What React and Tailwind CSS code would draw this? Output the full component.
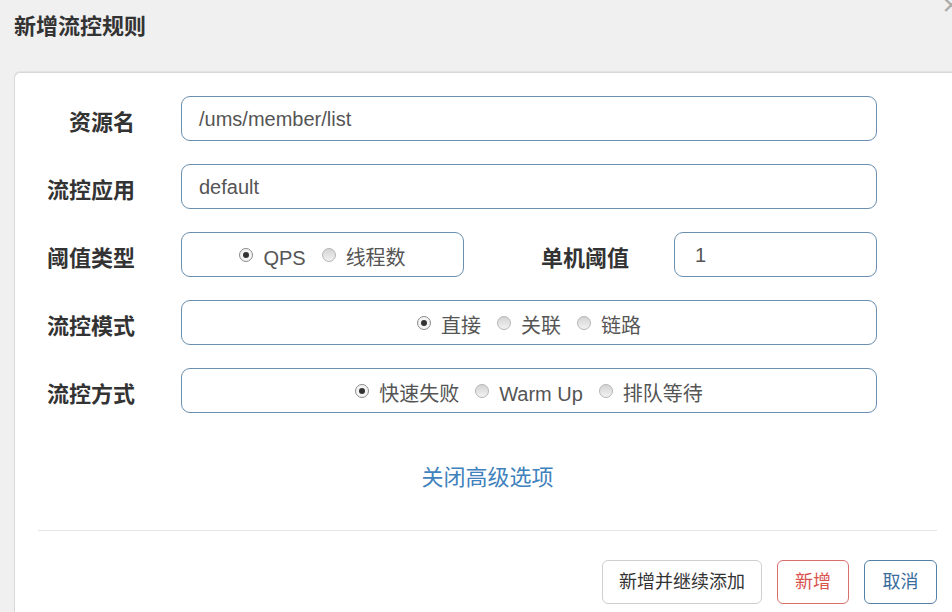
import React from 'react';

const font = { fontFamily: '"Liberation Sans", "Noto Sans CJK SC", sans-serif' };

const Radio = ({ label, checked }) => (
  <span className="flex items-center gap-[10px]">
    <span
      className={`w-[14px] h-[14px] rounded-full border flex items-center justify-center ${
        checked ? 'border-[#8c8c8c] bg-[#f4f4f4]' : 'border-[#b5b5b5] bg-gradient-to-b from-[#d4d4d4] to-[#f2f2f2]'
      }`}
    >
      {checked && <span className="w-[6px] h-[6px] rounded-full bg-[#333]" />}
    </span>
    <span className="text-[20px] text-[#555] pt-[6px]">{label}</span>
  </span>
);

const RadioBox = ({ options, className = '' }) => (
  <div
    className={`h-[45px] border-[1.5px] border-[#6b8fae] rounded-[9px] flex items-center justify-center gap-[16px] ${className}`}
  >
    {options.map((o, i) => (
      <Radio key={o} label={o} checked={i === 0} />
    ))}
  </div>
);

const TextBox = ({ value, className = '' }) => (
  <div
    className={`h-[45px] border-[1.5px] border-[#6b8fae] rounded-[9px] flex items-center pl-[17px] pt-[1px] text-[20px] text-[#555] ${className}`}
  >
    {value}
  </div>
);

const Label = ({ children, className = 'w-[120px]' }) => (
  <div className={`${className} text-right text-[22px] font-bold text-[#333] pt-[7px]`}>{children}</div>
);

const Row = ({ label, children }) => (
  <div className="flex items-center h-[45px]">
    <Label>{label}</Label>
    <div className="ml-[46px] flex items-center">{children}</div>
  </div>
);

export default function App() {
  return (
    <div className="relative w-[952px] h-[612px] overflow-hidden bg-[#f0f0f0]" style={font}>
      <span className="absolute right-[-8px] top-[-10px] text-[30px] leading-none text-[#aaa]">×</span>
      <div className="h-[72px] pl-[14px] pt-[10px] text-[22px] font-bold text-[#333]">新增流控规则</div>
      <div className="ml-[14px] w-[946px] h-[540px] bg-white border-t border-l border-[#d8d8d8] rounded-tl-[6px] shadow-[0_-1px_0_#e4e4e4]">
        <div className="pt-[23px] flex flex-col gap-[23px]">
          <Row label="资源名">
            <TextBox value="/ums/member/list" className="w-[696px]" />
          </Row>
          <Row label="流控应用">
            <TextBox value="default" className="w-[696px]" />
          </Row>
          <Row label="阈值类型">
            <RadioBox options={['QPS', '线程数']} className="w-[283px]" />
            <Label className="w-[165px]">单机阈值</Label>
            <TextBox value="1" className="w-[203px] ml-[45px] pl-[20px]" />
          </Row>
          <Row label="流控模式">
            <RadioBox options={['直接', '关联', '链路']} className="w-[696px]" />
          </Row>
          <Row label="流控方式">
            <RadioBox options={['快速失败', 'Warm Up', '排队等待']} className="w-[696px]" />
          </Row>
        </div>
        <div className="mt-[48px] text-center text-[22px] text-[#3f82bd]">关闭高级选项</div>
        <div className="mx-[23px] mt-[36px] border-t border-[#e5e5e5]" />
        <div className="mx-[23px] mt-[29px] flex justify-end gap-[15px]">
          <button className="h-[44px] w-[160px] border border-[#cfcfcf] rounded-[6px] text-[18px] text-[#333] bg-white">
            新增并继续添加
          </button>
          <button className="h-[44px] w-[72px] border border-[#d96f6c] rounded-[6px] text-[18px] text-[#d9534f] bg-white">
            新增
          </button>
          <button className="h-[44px] w-[73px] border border-[#5580a6] rounded-[6px] text-[18px] text-[#3a6d9c] bg-white">
            取消
          </button>
        </div>
      </div>
    </div>
  );
}
